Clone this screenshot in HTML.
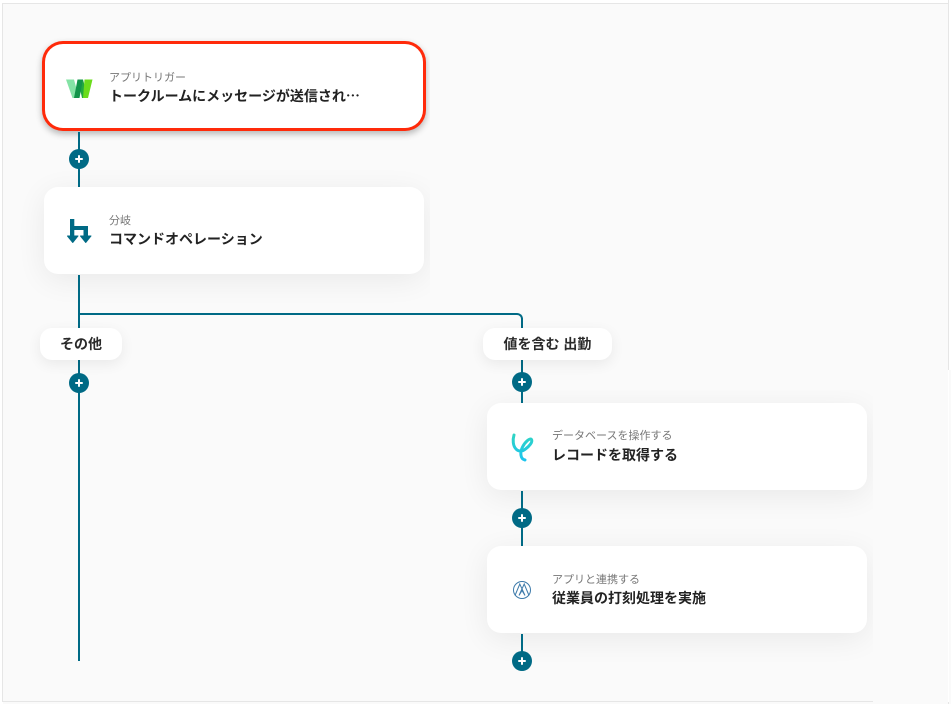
<!DOCTYPE html>
<html lang="ja">
<head>
<meta charset="utf-8">
<style>
html,body{margin:0;padding:0;width:951px;height:704px;overflow:hidden;background:#fff}
body{position:relative;font-family:"Liberation Sans","Noto Sans CJK JP",sans-serif;color:#222}
.abs{position:absolute}
.canvas{position:absolute;left:3px;top:4px;width:945px;height:700px;background:#fafafa}
.clip{position:absolute;overflow:hidden}
.card{position:absolute;background:#fff;border-radius:14px;box-shadow:0 6px 30px rgba(0,0,0,.07);width:380px;height:87px}
.sub{position:absolute;font-size:11px;line-height:14px;color:#777;white-space:nowrap}
.title{position:absolute;font-size:14px;line-height:18px;font-weight:700;color:#222;white-space:nowrap}
.label{position:absolute;top:328px;height:32px;background:#fff;border-radius:12px;box-shadow:0 4px 14px rgba(0,0,0,.07);font-size:14px;font-weight:700;line-height:32px;text-align:center;color:#2a2a2a;white-space:pre}
.line{position:absolute;background:#006a85}
.plus{position:absolute;width:20px;height:20px;border-radius:50%;background:#006a85}
.plus:before{content:"";position:absolute;left:6px;top:9px;width:8px;height:2px;background:#fff;border-radius:1px}
.plus:after{content:"";position:absolute;left:9px;top:6px;width:2px;height:8px;background:#fff;border-radius:1px}
.jp{font-family:"Noto Sans CJK JP",sans-serif}
</style>
</head>
<body>
<div class="canvas"></div>
<!-- frame lines -->
<div class="abs" style="left:2px;top:3px;width:947px;height:1px;background:#e6e6e6"></div>
<div class="abs" style="left:2px;top:3px;width:1px;height:699px;background:#e6e6e6"></div>
<div class="abs" style="left:948px;top:0;width:1px;height:370px;background:#e6e6e6"></div>
<div class="abs" style="left:949px;top:370px;width:2px;height:334px;background:#fafafa"></div>
<div class="abs" style="left:3px;top:701px;width:870px;height:1px;background:#e6e6e6"></div>
<div class="abs" style="left:948px;top:702px;width:1px;height:2px;background:#e6e6e6"></div>

<div class="clip" style="left:3px;top:4px;width:427px;height:320px">
  <div class="card" style="left:42px;top:40px;width:378px;height:84px;border-radius:18px;box-shadow:0 0 0 3px #ff2a0a,0 3px 7px 3px rgba(0,0,0,.28)"></div>
  <div class="card" style="left:41px;top:183px"></div>
</div>
<div class="clip" style="left:430px;top:390px;width:443px;height:310px">
  <div class="card" style="left:57px;top:13px"></div>
  <div class="card" style="left:57px;top:156px"></div>
</div>

<!-- connectors -->
<div class="line" style="left:78px;top:132px;width:2px;height:55px"></div>
<div class="line" style="left:78px;top:275px;width:2px;height:386px"></div>
<div class="abs" style="left:79px;top:313px;width:444px;height:30px;box-sizing:border-box;border-top:2px solid #006a85;border-right:2px solid #006a85;border-top-right-radius:6px"></div>
<div class="line" style="left:521px;top:340px;width:2px;height:63px"></div>
<div class="line" style="left:521px;top:491px;width:2px;height:55px"></div>
<div class="line" style="left:521px;top:634px;width:2px;height:27px"></div>

<div class="plus" style="left:69px;top:149px"></div>
<div class="plus" style="left:69px;top:373px"></div>
<div class="plus" style="left:512px;top:372px"></div>
<div class="plus" style="left:512px;top:508px"></div>
<div class="plus" style="left:512px;top:651px"></div>

<div class="label" style="left:40px;width:82px">その他</div>
<div class="label" style="left:483px;width:129px">値を含む 出勤</div>

<!-- card 1 -->
<svg class="abs" style="left:66px;top:79px" width="27" height="20" viewBox="0 0 27 20">
  <path d="M0 0.500H8L13 19H6.500Z" fill="#84e3a5"/>
  <path d="M12 0.500H17L22 19H16Z" fill="#22a83f"/>
  <path d="M8 19H13.500L17 0.500H11.500Z" fill="#12944a"/>
  <path d="M17 19H22L26.500 0.500H18.500Z" fill="#6bdc1c"/>
</svg>
<div class="sub" style="left:109px;top:71px">アプリトリガー</div>
<div class="title" style="left:109px;top:87px">トークルームにメッセージが送信され<span class="jp">…</span></div>

<!-- card 2 -->
<svg class="abs" style="left:67px;top:218px" width="25" height="26" viewBox="0 0 25 26" fill="#006a85">
  <path d="M3 1H7.300V8H21V19H16.500V12H7.300V19H3Z"/>
  <path d="M0.500 18H11L5.800 24.500Z" stroke="#006a85" stroke-width="1" stroke-linejoin="round"/>
  <path d="M13.500 18H24L18.800 24.500Z" stroke="#006a85" stroke-width="1" stroke-linejoin="round"/>
</svg>
<div class="sub" style="left:109px;top:214px">分岐</div>
<div class="title" style="left:109px;top:230px">コマンドオペレーション</div>

<!-- card 3 -->
<svg class="abs" style="left:510px;top:432px" width="26" height="30" viewBox="0 0 26 30" fill="none">
  <defs><linearGradient id="g" x1="0" y1="0" x2="0" y2="1"><stop offset="0" stop-color="#2fd4c4"/><stop offset="1" stop-color="#1cc4ee"/></linearGradient></defs>
  <path d="M4 3C2.500 8 3 14 6 17C8 19.500 12 20 15.500 17C19 14.500 23 10 21.500 7.500C20 5.500 15 10 12.500 15C10 20 10 27 15 28" stroke="url(#g)" stroke-width="3" stroke-linecap="round"/>
</svg>
<div class="sub" style="left:552px;top:429px">データベースを操作する</div>
<div class="title" style="left:552px;top:446px">レコードを取得する</div>

<!-- card 4 -->
<svg class="abs" style="left:512px;top:580px" width="20" height="20" viewBox="0 0 20 20" fill="none" stroke="#3d7aaa" stroke-width="1">
  <circle cx="10" cy="10" r="8.500"/>
  <path d="M3 15.500L7.800 4L13 15.500M7 15.500L12.200 4L17 15.500M7 15.500L10 10.500L13 15.500"/>
</svg>
<div class="sub" style="left:552px;top:573px">アプリと連携する</div>
<div class="title" style="left:552px;top:589px">従業員の打刻処理を実施</div>
</body>
</html>
